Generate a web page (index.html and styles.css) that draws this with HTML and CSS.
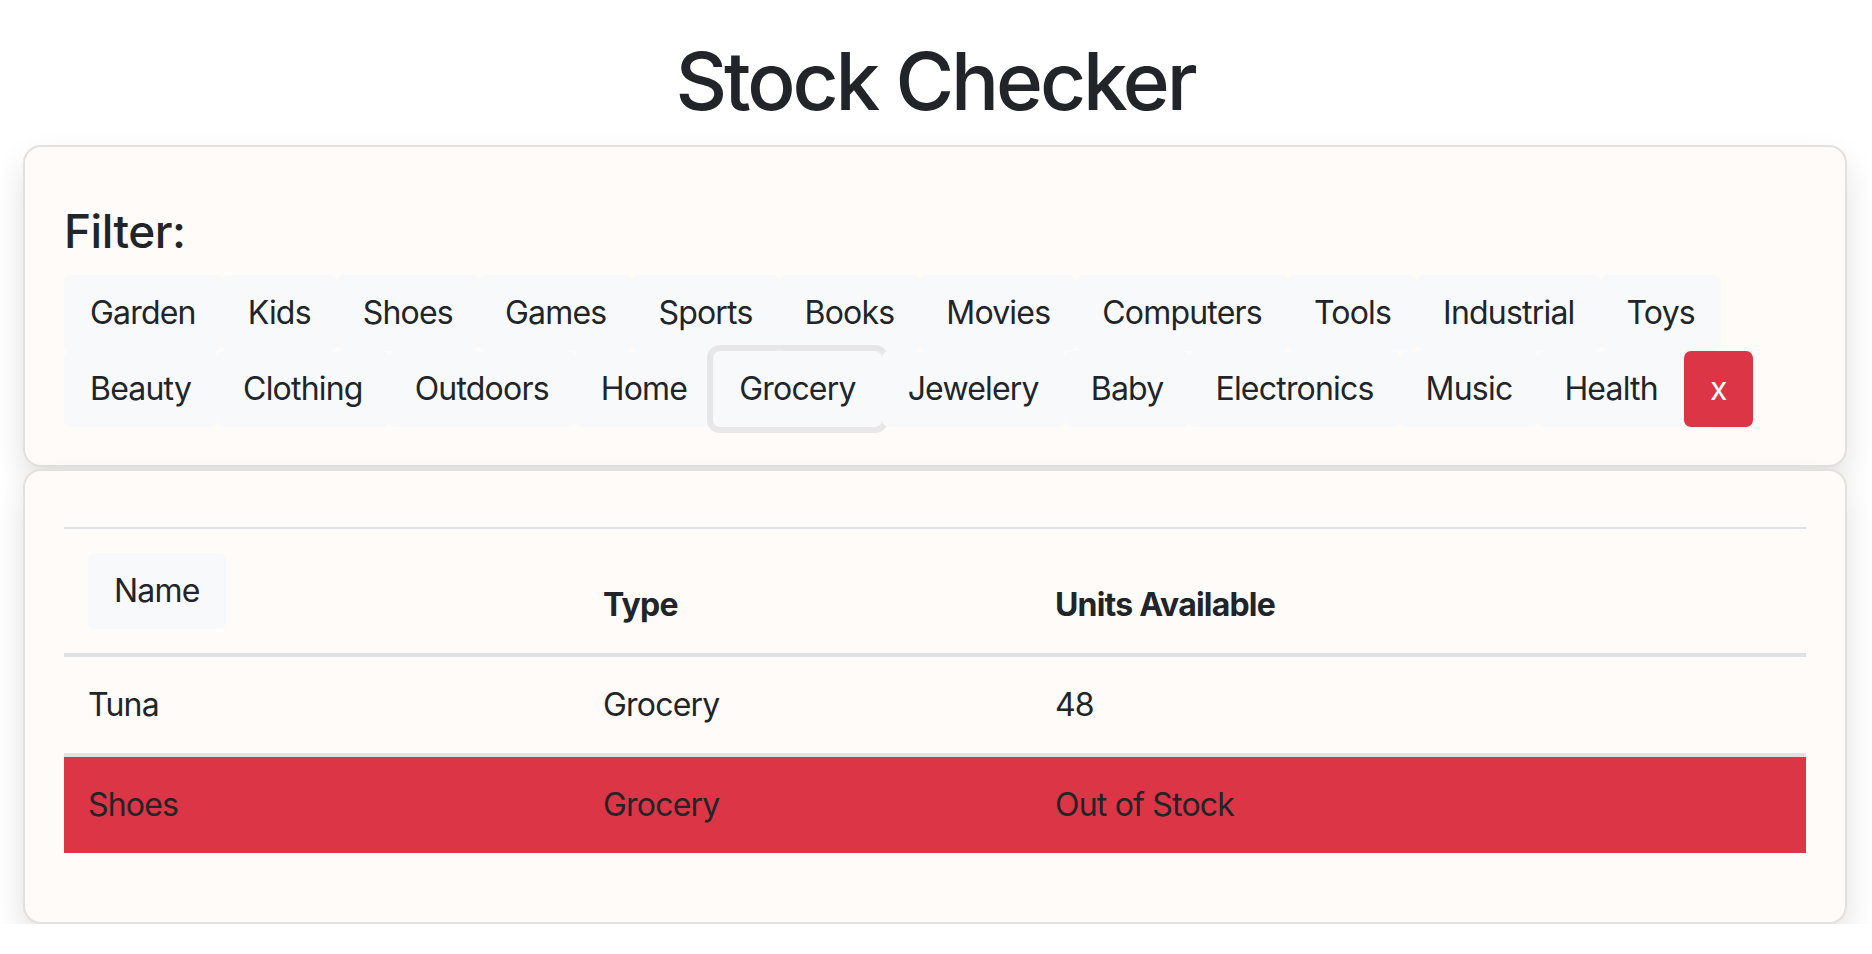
FILE: index.html
```html
<!DOCTYPE html>
<html lang="en">
<head>
<meta charset="utf-8">
<title>Stock Checker</title>
<link rel="stylesheet" href="styles.css">
</head>
<body>
<div class="page">
  <h1 class="title">Stock Checker</h1>
  <section class="card filter-card">
    <h4 class="filter-label">Filter:</h4>
    <div class="btn-row">
      <button class="btn btn-light">Garden</button>
      <button class="btn btn-light">Kids</button>
      <button class="btn btn-light">Shoes</button>
      <button class="btn btn-light">Games</button>
      <button class="btn btn-light">Sports</button>
      <button class="btn btn-light">Books</button>
      <button class="btn btn-light">Movies</button>
      <button class="btn btn-light">Computers</button>
      <button class="btn btn-light">Tools</button>
      <button class="btn btn-light">Industrial</button>
      <button class="btn btn-light">Toys</button>
    </div>
    <div class="btn-row">
      <button class="btn btn-light">Beauty</button>
      <button class="btn btn-light">Clothing</button>
      <button class="btn btn-light">Outdoors</button>
      <button class="btn btn-light">Home</button>
      <button class="btn btn-light is-focused">Grocery</button>
      <button class="btn btn-light">Jewelery</button>
      <button class="btn btn-light">Baby</button>
      <button class="btn btn-light">Electronics</button>
      <button class="btn btn-light">Music</button>
      <button class="btn btn-light">Health</button>
      <button class="btn btn-danger">x</button>
    </div>
  </section>
  <section class="card table-card">
    <table class="stock-table">
      <thead>
        <tr>
          <th class="col-name"><button class="btn btn-light sort-btn">Name</button></th>
          <th class="col-type">Type</th>
          <th class="col-units">Units Available</th>
        </tr>
      </thead>
      <tbody>
        <tr class="row-normal">
          <td>Tuna</td>
          <td>Grocery</td>
          <td>48</td>
        </tr>
        <tr class="row-danger">
          <td>Shoes</td>
          <td>Grocery</td>
          <td>Out of Stock</td>
        </tr>
      </tbody>
    </table>
  </section>
</div>
</body>
</html>
```
FILE: styles.css
```css
* {
  box-sizing: border-box;
}

body {
  margin: 0;
  background: #ffffff;
  color: #212529;
  font-family: Inter, "Noto Sans", "Liberation Sans", sans-serif;
  font-size: 32px;
  line-height: 48px;
}

.page {
  padding: 33px 25px 0 23px;
}

.title {
  margin: 0 0 16px;
  font-size: 80px;
  line-height: 96px;
  font-weight: 500;
  text-align: center;
  letter-spacing: -3.1px;
}

.card {
  background: #fffbf8;
  border: 2px solid #e4e0dd;
  border-radius: 18px;
  box-shadow: 0 16px 32px rgba(0, 0, 0, 0.12);
  padding: 40px 39px;
}

.filter-card {
  padding-bottom: 38px;
}

.filter-label {
  margin: 16px 0 14px;
  font-size: 46px;
  line-height: 57.6px;
  font-weight: 500;
  letter-spacing: -0.5px;
}

.btn-row {
  display: flex;
}

.btn {
  font-family: inherit;
  font-size: 32px;
  line-height: 48px;
  padding: 12px 24px;
  border: 2px solid transparent;
  border-radius: 7px;
  color: #212529;
  cursor: pointer;
  letter-spacing: -0.8px;
}

.btn-light {
  background: #f8f9fa;
  border-color: #f8f9fa;
}

.btn-danger {
  background: #dc3545;
  border-color: #dc3545;
  color: #ffffff;
}

.is-focused {
  box-shadow: 0 0 0 6px rgba(211, 212, 213, 0.5);
}

.table-card {
  margin-top: 2px;
}

.stock-table {
  width: 100%;
  table-layout: fixed;
  border-collapse: collapse;
  margin: 16px 0 29px;
  border-top: 2px solid #dee2e6;
}

.stock-table th,
.stock-table td {
  padding: 24px;
  text-align: left;
  letter-spacing: -0.8px;
}

.stock-table th {
  font-weight: 700;
  vertical-align: bottom;
  border-bottom: 4px solid #dee2e6;
}

.col-name {
  width: 515px;
}

.col-type {
  width: 452px;
}

.sort-btn {
  display: inline-block;
  vertical-align: top;
  font-weight: 400;
}

.row-normal td {
  border-bottom: 4px solid #dee2e6;
}

.row-danger td {
  background: #dc3545;
  color: #212529;
}
```
